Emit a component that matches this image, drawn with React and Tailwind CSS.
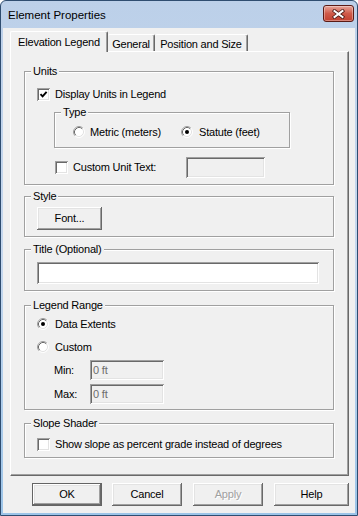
import React from "react";

const sunken =
  "shadow-[inset_1px_1px_0_#a0a0a0,inset_-1px_-1px_0_#ffffff,inset_2px_2px_0_#696969,inset_-2px_-2px_0_#e3e3e3]";
const raised =
  "shadow-[inset_-1px_-1px_0_#696969,inset_1px_1px_0_#ffffff,inset_-2px_-2px_0_#a0a0a0,inset_2px_2px_0_#e3e3e3]";

function Checkbox({ checked }) {
  return (
    <span className={"flex h-[13px] w-[13px] shrink-0 items-center justify-center bg-white " + sunken}>
      {checked && (
        <svg width="9" height="9" viewBox="0 0 9 9">
          <path d="M1.5 4.2 L3.6 6.4 L7.6 1.8" fill="none" stroke="#000" strokeWidth="1.9" />
        </svg>
      )}
    </span>
  );
}

function Radio({ checked }) {
  return (
    <svg width="12" height="12" viewBox="0 0 12 12" className="shrink-0">
      <circle cx="6" cy="6" r="5" fill="#fff" />
      <path d="M2.11 9.89A5.5 5.5 0 0 1 9.89 2.11" fill="none" stroke="#a0a0a0" />
      <path d="M9.89 2.11A5.5 5.5 0 0 1 2.11 9.89" fill="none" stroke="#ffffff" />
      <path d="M2.82 9.18A4.5 4.5 0 0 1 9.18 2.82" fill="none" stroke="#696969" />
      <path d="M9.18 2.82A4.5 4.5 0 0 1 2.82 9.18" fill="none" stroke="#e3e3e3" />
      {checked && <circle cx="6" cy="6" r="2" fill="#000" />}
    </svg>
  );
}

function Group({ label, className, children }) {
  return (
    <div
      className={
        "relative border border-[#a0a0a0] shadow-[1px_1px_0_#ffffff,inset_1px_1px_0_#ffffff] " + className
      }
    >
      <span className="absolute left-[6px] top-[-8px] bg-[#f0f0f0] px-[2px] leading-[14px]">{label}</span>
      {children}
    </div>
  );
}

function Button({ children, className, isDefault, disabled }) {
  return (
    <div
      className={
        "h-[23px] bg-[#f0f0f0] " +
        (isDefault ? "border border-[#646464] " : "") +
        className
      }
    >
      <div
        className={
          "flex h-full w-full items-center justify-center " +
          raised +
          (disabled ? " text-[#a0a0a0] [text-shadow:1px_1px_0_#ffffff]" : " text-black")
        }
      >
        {children}
      </div>
    </div>
  );
}

export default function App() {
  return (
    <div className="flex h-[516px] w-[358px] flex-col rounded-t-[6px] border border-[#2f4d70] bg-gradient-to-b from-[#bcd0e9] via-[#c6d8ee] to-[#9cc4e8] font-['Liberation_Sans',Arial,sans-serif] text-[11px] text-black">
      {/* title bar */}
      <div className="flex h-[27px] shrink-0 items-center pl-[7px] pr-[3px]">
        <span className="text-[11.5px] leading-[14px] text-black">Element Properties</span>
        <div className="ml-auto mt-[4px] flex h-[17px] w-[31px] items-center justify-center self-start rounded-[3px] border border-[#5b1a14] bg-gradient-to-b from-[#e6a499] via-[#cf5a49] to-[#c2402f] shadow-[inset_0_0_0_1px_rgba(255,255,255,0.35)]">
          <svg width="13" height="10" viewBox="0 0 13 10">
            <path d="M2.5 2 L10.5 8 M10.5 2 L2.5 8" stroke="#4a1a14" strokeWidth="3.6" strokeLinecap="square" />
            <path d="M2.5 2 L10.5 8 M10.5 2 L2.5 8" stroke="#ffffff" strokeWidth="2" strokeLinecap="square" />
          </svg>
        </div>
      </div>

      {/* body */}
      <div className="mx-[2px] mb-[2px] flex flex-1 flex-col bg-[#f0f0f0] pl-[7px] pr-[6px] tracking-[-0.2px]">
        {/* tabs */}
        <div className="relative z-10 -mb-[1px] mt-[3px] flex h-[21px] items-end">
          <div className="flex h-[21px] w-[98px] justify-center rounded-t-[2px] border-l border-r border-t border-l-white border-r-[#696969] border-t-white bg-[#f0f0f0] pt-[3px] leading-[14px] shadow-[inset_-1px_0_0_#a0a0a0]">
            Elevation Legend
          </div>
          <div className="mb-[1px] flex h-[17px] w-[47px] justify-center rounded-t-[2px] border-r border-t border-r-[#696969] border-t-white pt-[2px] leading-[14px] shadow-[inset_-1px_0_0_#a0a0a0]">
            General
          </div>
          <div className="mb-[1px] flex h-[17px] w-[93px] justify-center rounded-t-[2px] border-r border-t border-r-[#696969] border-t-white pt-[2px] leading-[14px] shadow-[inset_-1px_0_0_#a0a0a0]">
            Position and Size
          </div>
        </div>

        {/* panel */}
        <div className="flex h-[425px] flex-col border border-b-[#696969] border-l-white border-r-[#696969] border-t-white shadow-[inset_-1px_-1px_0_#a0a0a0]">
          {/* Units */}
          <Group label="Units" className="ml-[13px] mt-[19px] h-[114px] w-[310px]">
            <div className="ml-[12px] mt-[16px] flex h-[13px] items-center gap-[5px]">
              <Checkbox checked />
              <span className="leading-[13px]">Display Units in Legend</span>
            </div>
            <Group label="Type" className="ml-[29px] mt-[11px] h-[36px] w-[236px]">
              <div className="ml-[18px] mt-[13px] flex h-[12px] items-center">
                <div className="flex w-[108px] items-center gap-[5px]">
                  <Radio />
                  <span className="leading-[13px]">Metric (meters)</span>
                </div>
                <div className="flex items-center gap-[6px]">
                  <Radio checked />
                  <span className="leading-[13px]">Statute (feet)</span>
                </div>
              </div>
            </Group>
            <div className="ml-[30px] mt-[9px] flex h-[21px] items-center">
              <div className="flex w-[131px] items-center gap-[5px]">
                <Checkbox />
                <span className="leading-[13px]">Custom Unit Text:</span>
              </div>
              <div className={"h-[21px] w-[79px] bg-[#f0f0f0] " + sunken} />
            </div>
          </Group>

          {/* Style */}
          <Group label="Style" className="ml-[13px] mt-[11px] h-[41px] w-[310px]">
            <Button className="ml-[12px] mt-[10px] h-[22px] w-[65px]">Font...</Button>
          </Group>

          {/* Title */}
          <Group label="Title (Optional)" className="ml-[13px] mt-[12px] h-[42px] w-[310px]">
            <div className={"ml-[12px] mt-[12px] h-[22px] w-[282px] bg-white " + sunken} />
          </Group>

          {/* Legend Range */}
          <Group label="Legend Range" className="ml-[13px] mt-[14px] h-[105px] w-[310px]">
            <div className="ml-[12px] mt-[12px] flex h-[12px] items-center gap-[6px]">
              <Radio checked />
              <span className="leading-[13px]">Data Extents</span>
            </div>
            <div className="ml-[12px] mt-[11px] flex h-[12px] items-center gap-[6px]">
              <Radio />
              <span className="leading-[13px]">Custom</span>
            </div>
            <div className="ml-[29px] mt-[7px] flex h-[20px] items-center">
              <span className="w-[36px] leading-[13px]">Min:</span>
              <div className={"flex h-[20px] w-[74px] items-center bg-[#f0f0f0] pl-[3px] text-[#6d6d6d] " + sunken}>
                0 ft
              </div>
            </div>
            <div className="ml-[29px] mt-[4px] flex h-[20px] items-center">
              <span className="w-[36px] leading-[13px]">Max:</span>
              <div className={"flex h-[20px] w-[74px] items-center bg-[#f0f0f0] pl-[3px] text-[#6d6d6d] " + sunken}>
                0 ft
              </div>
            </div>
          </Group>

          {/* Slope Shader */}
          <Group label="Slope Shader" className="ml-[13px] mt-[13px] h-[35px] w-[310px]">
            <div className="ml-[12px] mt-[14px] flex h-[13px] items-center gap-[5px]">
              <Checkbox />
              <span className="leading-[13px]">Show slope as percent grade instead of degrees</span>
            </div>
          </Group>
        </div>

        {/* buttons */}
        <div className="mt-[7px] flex items-center">
          <Button isDefault className="ml-[22px] w-[70px]">
            OK
          </Button>
          <Button className="ml-[10px] w-[70px]">Cancel</Button>
          <Button disabled className="ml-[11px] w-[70px]">
            Apply
          </Button>
          <Button className="ml-[11px] w-[75px]">Help</Button>
        </div>
      </div>
    </div>
  );
}
